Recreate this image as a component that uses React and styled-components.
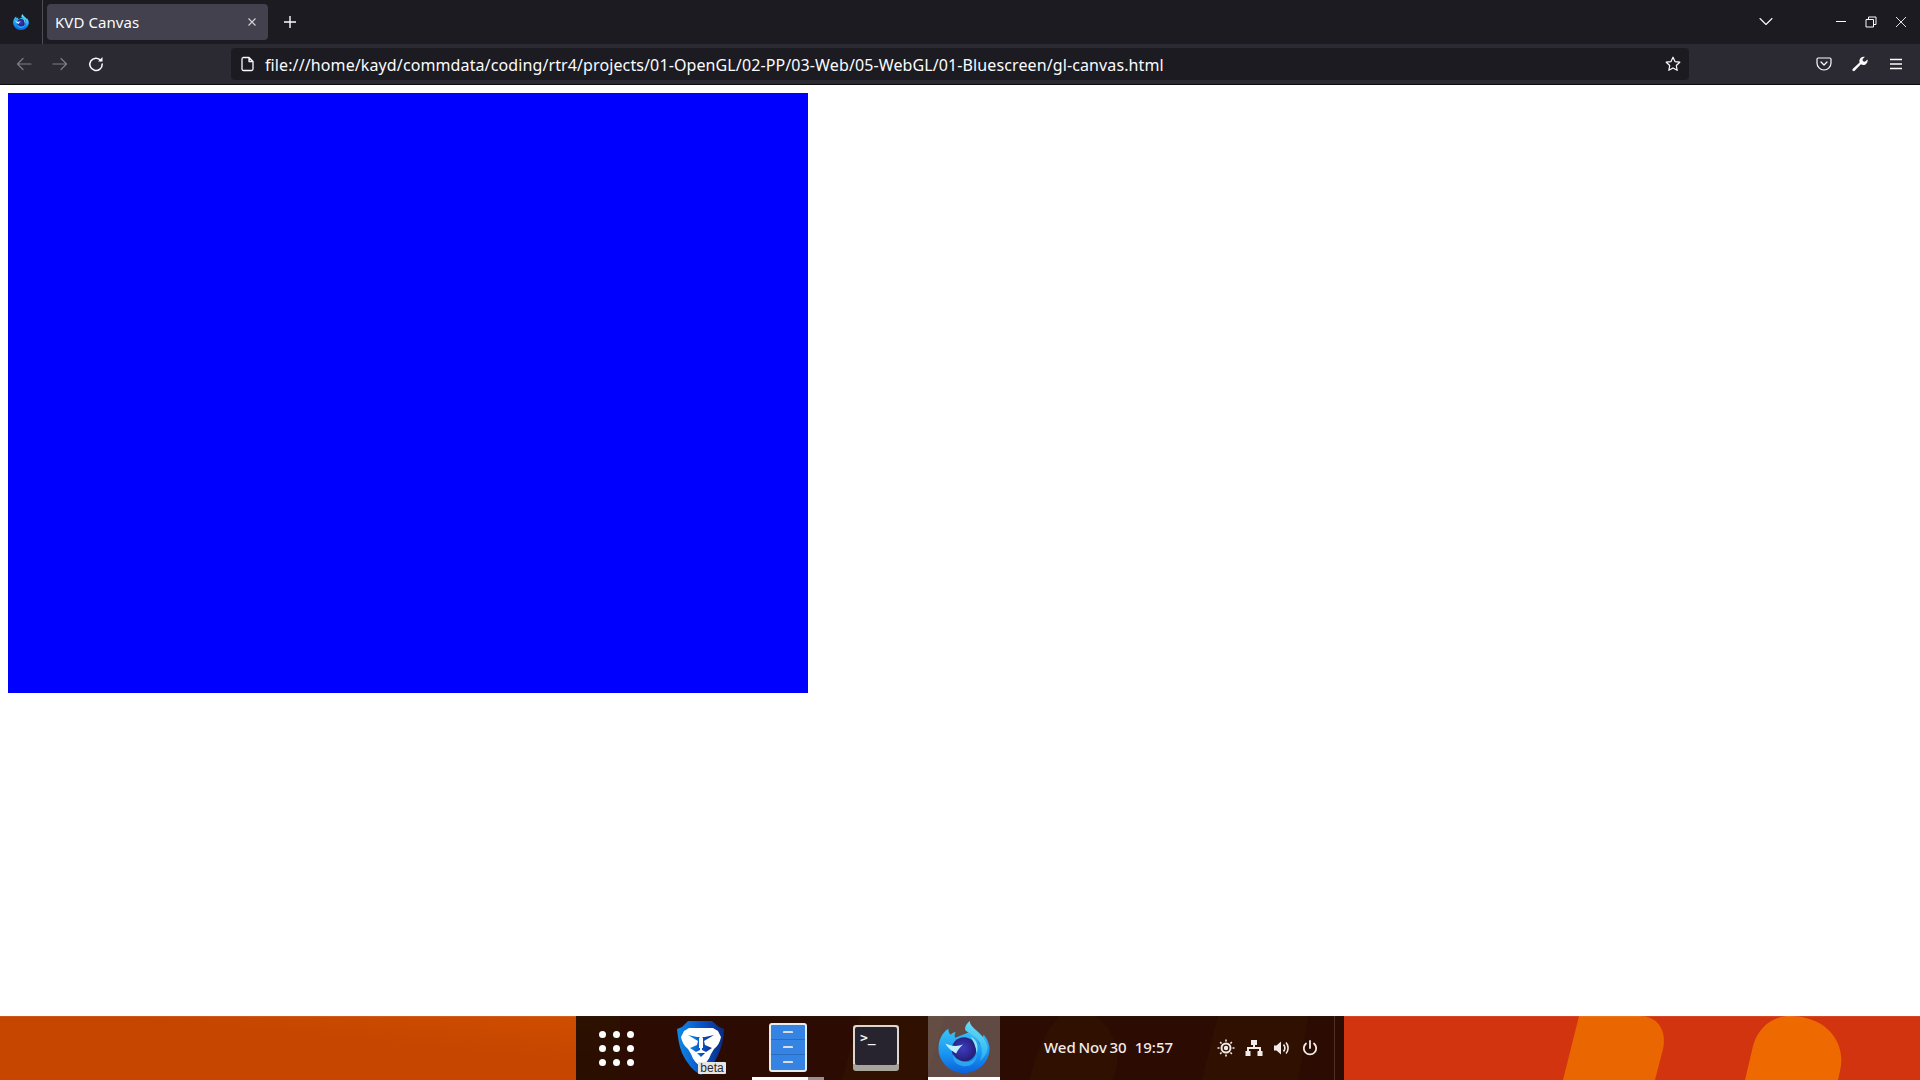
import React from "react";
import styled, { createGlobalStyle } from "styled-components";

const Global = createGlobalStyle`
  html, body { margin: 0; padding: 0; height: 100%; background: #fff; overflow: hidden; }
  #root { height: 100%; }
  * { box-sizing: border-box; }
`;

const Screen = styled.div`
  width: 1920px; height: 1080px; display: flex; flex-direction: column;
  font-family: "Noto Sans", "Open Sans", sans-serif;
`;
const TabBar = styled.div`
  height: 44px; flex: none; display: flex; align-items: flex-start; background: #1c1b22; color: #fbfbfe;
`;
const TabListButton = styled.div`
  height: 44px; display: flex; align-items: center; justify-content: center;
  border-right: 1px solid #4e4d57; width: 43px; flex: none;
`;
const Tab = styled.div`
  margin: 4px 0 0 4px; width: 221px; height: 36px; background: #42414d; border-radius: 4px;
  display: flex; align-items: center; justify-content: space-between; padding: 0 12px 0 8px;
  font-size: 15px; color: #fbfbfe; flex: none; letter-spacing: 0.08px;
`;
const NewTab = styled.div`
  width: 16px; height: 16px; margin: 14px 0 0 14px; display: flex;
`;
const TabSpacer = styled.div`flex: 1;`;
const ListAll = styled.div`
  width: 14px; height: 10px; margin: 17px 62px 0 0; display: flex;
`;
const WindowButtons = styled.div`
  display: flex; gap: 18px; margin: 16px 13px 0 0;
`;
const WinButton = styled.div`width: 12px; height: 12px; display: flex;`;

const Toolbar = styled.div`
  height: 41px; flex: none; display: flex; align-items: flex-start; background: #2b2a33; border-bottom: 1px solid #0c0c0d; color: #fbfbfe;
`;
const NavGroup = styled.div`
  width: 231px; height: 40px; flex: none; display: flex; align-items: center; gap: 20px; padding-left: 16px;
`;
const NavIcon = styled.div`
  width: 16px; height: 16px; display: flex; flex: none; opacity: ${p => (p.$dim ? 0.4 : 1)};
`;
const UrlBar = styled.div`
  width: 1458px; height: 32px; margin-top: 4px; flex: none; background: #1c1b22; border-radius: 4px;
  display: flex; align-items: center; padding: 0 8px 0 9px; color: #fbfbfe; font-size: 16px;
`;
const UrlText = styled.span`margin-left: 9px; padding-top: 1px; flex: 1; white-space: nowrap; letter-spacing: 0.11px;`;
const Actions = styled.div`
  flex: 1; height: 40px; display: flex; align-items: center; gap: 20px; padding-left: 127px;
`;

const Page = styled.div`
  flex: 1; background: #fff; padding: 8px; min-height: 0;
`;
const GlCanvas = styled.div`
  width: 800px; height: 600px; background: #0000ff;
`;

const Dock = styled.div`
  height: 64px; flex: none; position: relative; background: #d1340e; display: flex; overflow: hidden;
`;
const Wallpaper = styled.svg`
  position: absolute; inset: 0; width: 1920px; height: 64px;
`;
const Panel = styled.div`
  position: relative; margin-left: 576px; width: 768px; height: 64px; background: rgba(0,0,0,.79);
  display: flex; align-items: flex-start;
`;
const GridButton = styled.div`
  width: 88px; height: 64px; flex: none; display: flex; align-items: center; justify-content: flex-end; padding-right: 30px;
`;
const Dots = styled.div`
  display: grid; grid-template-columns: repeat(3, 7px); grid-auto-rows: 7px; gap: 7px;
`;
const Dot = styled.span`width: 7px; height: 7px; border-radius: 50%; background: #fff;`;
const Apps = styled.div`
  display: flex; gap: 16px; flex: none;
`;
const AppTile = styled.div`
  width: 72px; height: 64px; position: relative; display: flex; align-items: center; justify-content: center;
  background: ${p => (p.$active ? "rgba(255,255,255,.26)" : "transparent")};
  padding-bottom: 3px;
`;
const Running = styled.div`
  position: absolute; left: 0; bottom: 0; height: 3px; width: 100%;
  background: ${p => (p.$split ? "linear-gradient(90deg,#fff 0 56px,#9a918c 56px)" : "#fff")};
`;
const BraveWrap = styled.div`position: relative; width: 48px; height: 56px; display: flex; margin: 3px 0 0 2px;`;
const BetaTag = styled.span`
  position: absolute; left: 21px; top: 42px; width: 28px; height: 12px; background: #e6e6e6; color: #2b2b2b;
  font: 12px/11px "Liberation Sans", sans-serif; display: flex; align-items: center; justify-content: center; border-radius: 1px;
`;
const FileCabinet = styled.div`
  width: 38px; height: 49px; border: 2px solid #e9edf2; border-radius: 3px; background: #3584e4;
  display: grid; grid-template-rows: repeat(3, 1fr); margin-top: 1px;
`;
const Drawer = styled.div`
  border-bottom: ${p => (p.$last ? "none" : "1px solid #2a6cc0")}; display: flex; align-items: center; justify-content: center;
  &::after { content: ""; width: 10px; height: 2px; background: #d8dde2; border-radius: 1px 1px 0 0; }
`;
const Terminal = styled.div`
  width: 46px; height: 46px; border-radius: 3px; background: linear-gradient(180deg, #dcd8d0 0 85%, #a8a49c 85%);
  padding: 2px 2px 6px; margin-top: 3px; display: flex;
`;
const TerminalScreen = styled.div`
  flex: 1; background: #272430; border-radius: 2px; color: #f2f2f2;
  font: 700 13px/13px "DejaVu Sans Mono", monospace; padding: 4px 0 0 5px;
`;
const Clock = styled.div`
  margin-left: 44px; width: 166px; height: 64px; flex: none; display: flex; align-items: center; gap: 8px; color: #f2ece8;
  font-size: 15px; font-weight: 500; padding-bottom: 2px; white-space: nowrap; word-spacing: -1.2px;
`;
const Tray = styled.div`
  display: flex; gap: 8px; height: 64px; align-items: center; margin-left: 6px; padding-bottom: 1px;
`;
const TrayIcon = styled.div`width: 20px; height: 20px; display: flex;`;
const EdgeLine = styled.div`
  position: absolute; right: 9px; top: 0; width: 1px; height: 64px; background: rgba(255,255,255,.15);
`;
const TopHighlight = styled.div`
  position: absolute; left: 0; right: 0; top: 0; height: 1px; background: rgba(255,255,255,.1);
`;

const Stroke = ({ children, sw = 1.5, vb = "0 0 16 16" }) => (
  <svg width="100%" height="100%" viewBox={vb} fill="none" stroke="currentColor" strokeWidth={sw} strokeLinecap="round" strokeLinejoin="round">{children}</svg>
);

const FirefoxLogo = ({ size = 52, id }) => (
  <svg width={size} height={size} viewBox="0 0 52 53">
    <defs>
      <linearGradient id={id + "a"} x1="0.5" y1="0" x2="0.5" y2="1"><stop offset="0" stopColor="#39c5f5" /><stop offset=".55" stopColor="#1a96f2" /><stop offset="1" stopColor="#0b62dd" /></linearGradient>
      <linearGradient id={id + "b"} x1="0.7" y1="0" x2="0.5" y2="1"><stop offset="0" stopColor="#6fe2f7" /><stop offset="1" stopColor="#20a8f0" /></linearGradient>
      <radialGradient id={id + "c"} cx=".45" cy=".45" r=".6"><stop offset="0" stopColor="#3c3cc2" /><stop offset="1" stopColor="#241a6e" /></radialGradient>
    </defs>
    <path fill={`url(#${id}a)`} d="M10 8 C10 11 11 13 12.5 14 C14 12 16 11 17.5 11.5 C16.5 13 16 15 17 17 L30 12 C34 13 40 18 42 24 L46 14 C50 18 52 24 52 28 C52 42 40 53 26 53 C11 53 0 41 0 28 C0 19 4 12 10 8 Z" />
    <path fill={`url(#${id}b)`} d="M32 0 C32 4 35 6 39 10 C44 14 48 19 50 26 C50 33 46 38 42 41 C45 35 45 27 41 21 C37 15 29 12 27 9 C27 5 29 2 32 0 Z" />
    <circle cx="26" cy="29" r="12.5" fill={`url(#${id}c)`} />
    <path fill="#2aa6f0" d="M15 34 C18 40 26 43 32 41 C36 40 38 37 39 33 C40 41 33 47 25 46 C18 45 14 40 15 34 Z" />
    <path fill="#bff0fb" d="M7 23 C13 26 20 26 25 24 C22 27 20 29 18 33 C14 31 9 27 7 23 Z" />
    <path fill="#8ce6f8" d="M33 16 C39 19 41 25 39 33 C38 26 36 21 33 16 Z" />
  </svg>
);

const BraveLogo = () => (
  <svg width="48" height="56" viewBox="0 0 48 56">
    <defs>
      <linearGradient id="brv" x1="0" y1="0" x2="1" y2="0"><stop offset="0" stopColor="#0f8ae8" /><stop offset=".55" stopColor="#0a52c4" /><stop offset="1" stopColor="#0a2a80" /></linearGradient>
    </defs>
    <path fill="url(#brv)" d="M11 1 L35 1 L42 7 L47 9 C47 18 45 26 42 33 C38 42 32 51 24 55 C16 51 9 42 5 33 C2 26 1 18 0 9 L5 7 Z" />
    <path fill="#fff" d="M12 8 L36 8 L41 11 L44 17 C43 22 41 26 37 29 L34 34 C32 40 28 44 24 47 C20 44 16 40 14 34 L11 29 C7 26 5 22 4 17 L7 11 Z" />
    <path fill="url(#brv)" d="M11 15 L20 17 L23 17 L23 30 L19 32 L13 28 L20 25 L21 21 Z M37 15 L28 17 L25 17 L25 30 L29 32 L35 28 L28 25 L27 21 Z" />
    <path fill="#fff" d="M22 17.5h4V28h-4z" />
    <path fill="url(#brv)" d="M20 33 L28 33 L24 37 Z" />
  </svg>
);

export default function App() {
  return (
    <Screen>
      <Global />
      <TabBar>
        <TabListButton><FirefoxLogo size={16} id="ffs" /></TabListButton>
        <Tab>
          KVD Canvas
          <svg width="8" height="8" viewBox="0 0 8 8" stroke="#d4d4d8" strokeWidth="1.1"><path d="M.5.5l7 7M7.5.5l-7 7" /></svg>
        </Tab>
        <NewTab><Stroke sw={1.4}><path d="M8 2v12M2 8h12" strokeLinecap="butt" /></Stroke></NewTab>
        <TabSpacer />
        <ListAll><Stroke sw={1.1} vb="0 0 14 10"><path d="M1 1.5l6 6 6-6" /></Stroke></ListAll>
        <WindowButtons>
          <WinButton><Stroke sw={1} vb="0 0 12 12"><path d="M1 5.5h10" strokeLinecap="butt" /></Stroke></WinButton>
          <WinButton><Stroke sw={1} vb="0 0 12 12"><path d="M1 3.5h7.5v7.5H1zM3.5 3.5V1H11v7.5H8.5" strokeLinecap="butt" strokeLinejoin="miter" /></Stroke></WinButton>
          <WinButton><Stroke sw={.9} vb="0 0 12 12"><path d="M1 1l10 10M11 1L1 11" strokeLinecap="butt" /></Stroke></WinButton>
        </WindowButtons>
      </TabBar>
      <Toolbar>
        <NavGroup>
          <NavIcon $dim><Stroke sw={1.2}><path d="M15 8H1.5M7 2.5L1.5 8 7 13.5" /></Stroke></NavIcon>
          <NavIcon $dim><Stroke sw={1.2}><path d="M1 8h13.5M9 2.5L14.5 8 9 13.5" /></Stroke></NavIcon>
          <NavIcon><Stroke sw={1.5}><path d="M12.8 4.4A6.2 6.2 0 1 0 14.2 8" /><path d="M10 5.5h4.5V1z" fill="currentColor" stroke="none" /></Stroke></NavIcon>
        </NavGroup>
        <UrlBar>
          <NavIcon><Stroke sw={1.3}><path d="M3 1.5h6l4 4V13a1.5 1.5 0 0 1-1.5 1.5h-8A1.5 1.5 0 0 1 2 13V3a1.5 1.5 0 0 1 1-1.5zM9 1.5V5.5h4" /></Stroke></NavIcon>
          <UrlText>file:///home/kayd/commdata/coding/rtr4/projects/01-OpenGL/02-PP/03-Web/05-WebGL/01-Bluescreen/gl-canvas.html</UrlText>
          <NavIcon><Stroke sw={1.2}><path d="M8 1.2l2 4.4 4.8.6-3.5 3.3.9 4.8L8 11.9l-4.2 2.4.9-4.8L1.2 6.2 6 5.6z" /></Stroke></NavIcon>
        </UrlBar>
        <Actions>
          <NavIcon><Stroke sw={1.2}><path d="M2.2 2h11.6c.7 0 1.2.5 1.2 1.2V7a7 7 0 0 1-14 0V3.2C1 2.5 1.5 2 2.2 2z" /><path d="M5 6l3 3 3-3" /></Stroke></NavIcon>
          <NavIcon><svg width="16" height="16" viewBox="0 0 16 16" fill="currentColor"><path d="M15.5 3.5l-2.6 2.3-2-.6-.4-2 2.4-2.4a4.4 4.4 0 0 0-5.3 5.6L.9 12.8c-.7.7-.6 1.5-.1 2 .5.5 1.3.5 1.9 0l6.2-6.5a4.4 4.4 0 0 0 6.6-4.8z" /></svg></NavIcon>
          <NavIcon><Stroke sw={1.3}><path d="M2 3.5h12M2 8h12M2 12.5h12" strokeLinecap="butt" /></Stroke></NavIcon>
        </Actions>
      </Toolbar>
      <Page><GlCanvas /></Page>
      <Dock>
        <Wallpaper viewBox="0 0 1920 64" preserveAspectRatio="none">
          <defs>
            <linearGradient id="leftWall" x1="0" y1="1" x2="1" y2="0"><stop offset="0" stopColor="#c64600" /><stop offset=".6" stopColor="#c64600" /><stop offset="1" stopColor="#d04e00" /></linearGradient>
          </defs>
          <path fill="url(#leftWall)" d="M0 0H620V64H0Z" />
          <path fill="#ea6600" d="M1579 0H1640C1658 0 1667 15 1663 33L1655 64H1563Z" />
          <path fill="#ee6a00" d="M1790 0C1825 0 1847 25 1840 55L1838 64H1745L1753 30C1758 12 1772 0 1790 0Z" />
          <path fill="#ea6600" d="M1060 0H1095C1118 15 1122 45 1112 64H1030C1035 40 1045 15 1060 0Z" opacity=".5" />
          <path fill="#ea6600" d="M1218 0H1308L1298 64H1202Z" opacity=".5" />
          <path fill="#ea6600" d="M860 0H945L925 64H842Z" opacity=".5" />
        </Wallpaper>
        <TopHighlight />
        <Panel>
          <GridButton><Dots>{Array.from({ length: 9 }, (_, i) => <Dot key={i} />)}</Dots></GridButton>
          <Apps>
            <AppTile><BraveWrap><BraveLogo /><BetaTag>beta</BetaTag></BraveWrap></AppTile>
            <AppTile>
              <FileCabinet><Drawer /><Drawer /><Drawer $last /></FileCabinet>
              <Running $split />
            </AppTile>
            <AppTile><Terminal><TerminalScreen>&gt;_</TerminalScreen></Terminal></AppTile>
            <AppTile $active><FirefoxLogo id="ffl" /><Running /></AppTile>
          </Apps>
          <Clock><span>Wed Nov 30</span><span>19:57</span></Clock>
          <Tray>
            <TrayIcon><svg viewBox="0 0 20 20" fill="#f2ece8"><circle cx="10" cy="10" r="4.5" fill="none" stroke="#f2ece8" strokeWidth="2" /><circle cx="10" cy="10" r="2.2" /><path d="M9.2 1.5h1.6v2H9.2zM9.2 16.5h1.6v2H9.2zM1.5 9.2h2v1.6h-2zM16.5 9.2h2v1.6h-2zM3.6 4.7l1.1-1.1 1.4 1.4L5 6.1zM13.9 15l1.1-1.1 1.4 1.4-1.1 1.1zM3.6 15.3l1.4-1.4 1.1 1.1-1.4 1.4zM13.9 5l1.4-1.4 1.1 1.1L15 6.1z" /></svg></TrayIcon>
            <TrayIcon><svg viewBox="0 0 20 20" fill="#f2ece8"><path d="M7 2h6v5h-2v2h6v4h1.5v5h-5v-5H15v-2H5v2h1.5v5h-5v-5H3V9h6V7H7z" /></svg></TrayIcon>
            <TrayIcon><svg viewBox="0 0 20 20" fill="#f2ece8"><path d="M2 7.5h2.5L9 3.5v13l-4.5-4H2z" /><path d="M11.5 6.5c1.6 2 1.6 5 0 7M14 4.5c2.8 3.2 2.8 7.8 0 11" fill="none" stroke="#f2ece8" strokeWidth="1.6" /></svg></TrayIcon>
            <TrayIcon><svg viewBox="0 0 20 20" fill="none" stroke="#f2ece8" strokeWidth="1.8" strokeLinecap="round"><path d="M10 3v7M6 5.5a6.2 6.2 0 1 0 8 0" /></svg></TrayIcon>
          </Tray>
          <EdgeLine />
        </Panel>
      </Dock>
    </Screen>
  );
}
